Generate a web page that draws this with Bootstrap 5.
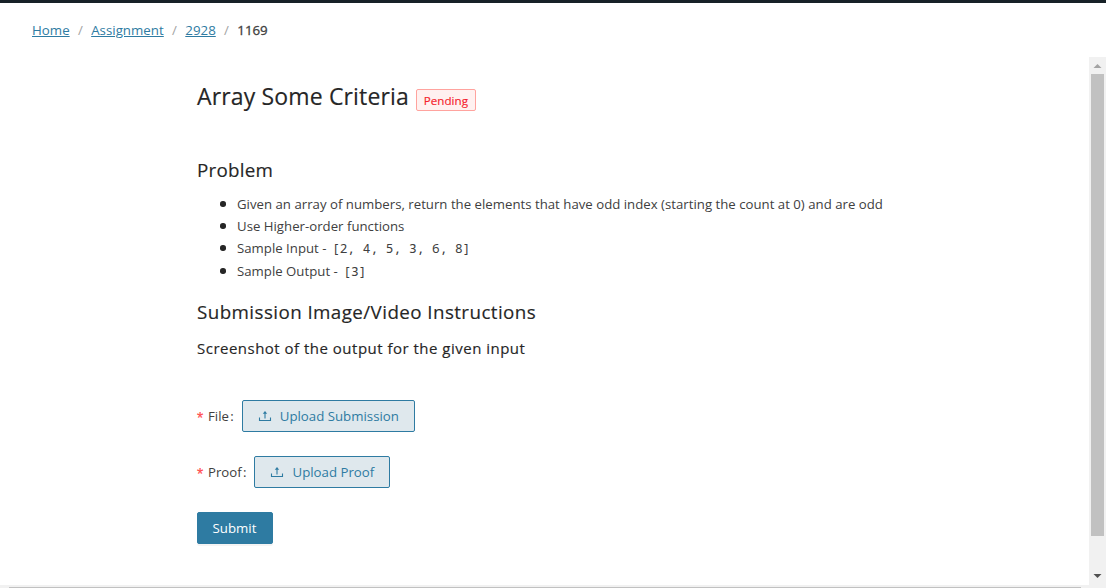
<!DOCTYPE html>
<html lang="en">
<head>
<meta charset="utf-8">
<meta name="viewport" content="width=device-width, initial-scale=1">
<title>Array Some Criteria</title>
<link href="https://cdn.jsdelivr.net/npm/bootstrap@5.3.0/dist/css/bootstrap.min.css" rel="stylesheet">
<style>
body{font-family:"Open Sans",sans-serif;font-size:13.2px;line-height:22px;color:#404040;letter-spacing:.015px}
.topline{height:3px;background:#172127}
.crumbs{height:54px;padding-left:32px;--bs-breadcrumb-item-padding-x:8.3px;font-size:13.3px}
.crumbs a{color:#2e7ba2}
.crumbs .breadcrumb-item+.breadcrumb-item::before{color:#a3a3a3;-webkit-text-stroke:0}
.crumbs .active{color:#404040;-webkit-text-stroke:.3px #404040}
.pane{padding:22px 0 0 197px;min-height:0}
.title-main,.title-sub,.title-small{color:#262626;font-weight:400;margin:0;-webkit-text-stroke:.15px #262626}
.title-main{font-size:23px;line-height:34px;padding-bottom:2px;letter-spacing:.15px}
.title-sub{font-size:18.8px;line-height:28px;letter-spacing:.25px}
.title-wide{letter-spacing:.42px}
.title-small{font-size:15px;line-height:24px;margin-top:10px;letter-spacing:.49px}
.tag{font-size:11.6px;line-height:21px;height:22px;width:60px;text-align:center;margin:6px 0 0 7px;border:1px solid #ffa39e;background:#fff1f0;color:#f5222d;border-radius:2px;-webkit-text-stroke:.15px #f5222d}
.problem{margin-top:41px}
.task-list{padding-left:40px;margin:9px 0 16px}
.task-list li{position:relative;list-style:none;height:22px}
.task-list li:nth-child(3){height:23px}
.task-list li::before{content:"";position:absolute;left:-17px;top:8px;width:5.5px;height:5.5px;border-radius:50%;background:#262626}
.task-list code{font:12.8px/20px "Noto Sans Mono","DejaVu Sans Mono",monospace;letter-spacing:.02px;color:#404040;margin-left:2px}
.upload-form{margin-top:40px;gap:24px}
.star{color:#ff4d4f;width:11px;font:16px/1 "Liberation Sans",sans-serif;padding-top:5px;-webkit-text-stroke:.2px #ff4d4f}
.colon{margin:0 8px 0 1.3px}
.btn-up,.btn-send{height:32px;border:1px solid #2e7ba2;border-radius:2px;font-size:13.25px;line-height:22px}
.btn-up{background:#dfe8ed;color:#2e7ba2;padding:0 15px;gap:8px}
.btn-send{width:76px;background:#2e7ba2;color:#fff;padding:0 1px 0 0;box-shadow:0 2px 0 rgba(0,0,0,.045)}
.vbar{width:17px;background:#f1f1f1;flex:none}
.vbar svg{display:block}
.vthumb{width:13px;height:462px;background:#c1c1c1}
.hbar{height:3px;background:#f1f1f1;padding:2px 25px 0 9px}
.hthumb{height:1px;background:#c1c1c1}
</style>
</head>
<body class="vh-100 overflow-hidden d-flex flex-column bg-white">
<div class="topline flex-shrink-0"></div>
<nav aria-label="breadcrumb">
<ol class="breadcrumb crumbs align-items-center mb-0">
<li class="breadcrumb-item"><a href="#">Home</a></li>
<li class="breadcrumb-item"><a href="#">Assignment</a></li>
<li class="breadcrumb-item"><a href="#">2928</a></li>
<li class="breadcrumb-item active" aria-current="page">1169</li>
</ol>
</nav>
<div class="d-flex flex-grow-1">
<main class="pane flex-grow-1">
<div class="d-flex align-items-center"><h1 class="title-main">Array Some Criteria</h1><span class="tag">Pending</span></div>
<h2 class="title-sub problem">Problem</h2>
<ul class="task-list">
<li>Given an array of numbers, return the elements that have odd index (starting the count at 0) and are odd</li>
<li>Use Higher-order functions</li>
<li>Sample Input - <code>[2, 4, 5, 3, 6, 8]</code></li>
<li>Sample Output - <code>[3]</code></li>
</ul>
<h2 class="title-sub title-wide">Submission Image/Video Instructions</h2>
<h3 class="title-small">Screenshot of the output for the given input</h3>
<form class="upload-form d-flex flex-column align-items-start">
<div class="d-flex align-items-center"><span class="star">*</span><span>File</span><span class="colon">:</span>
<button type="button" class="btn btn-up d-flex align-items-center"><svg width="14" height="14" viewBox="0 0 14 14" fill="none" stroke="currentColor" stroke-width="1.1"><path d="M1.500 8.500v3h11v-3M7 9.500V4"/><path d="M7 2 9.200 4.800H4.800z" fill="currentColor" stroke="none"/></svg><span>Upload Submission</span></button></div>
<div class="d-flex align-items-center"><span class="star">*</span><span>Proof</span><span class="colon">:</span>
<button type="button" class="btn btn-up d-flex align-items-center"><svg width="14" height="14" viewBox="0 0 14 14" fill="none" stroke="currentColor" stroke-width="1.1"><path d="M1.500 8.500v3h11v-3M7 9.500V4"/><path d="M7 2 9.200 4.800H4.800z" fill="currentColor" stroke="none"/></svg><span>Upload Proof</span></button></div>
<button type="button" class="btn btn-send">Submit</button>
</form>
</main>
<div class="vbar d-flex flex-column align-items-center">
<svg width="17" height="17"><path d="M4.500 11h8l-4-4z" fill="#a3a3a3"/></svg>
<div class="vthumb"></div>
<svg class="mt-auto" width="17" height="17"><path d="M4.500 6h8l-4 4z" fill="#505050"/></svg>
</div>
</div>
<div class="hbar flex-shrink-0"><div class="hthumb"></div></div>
</body>
</html>
